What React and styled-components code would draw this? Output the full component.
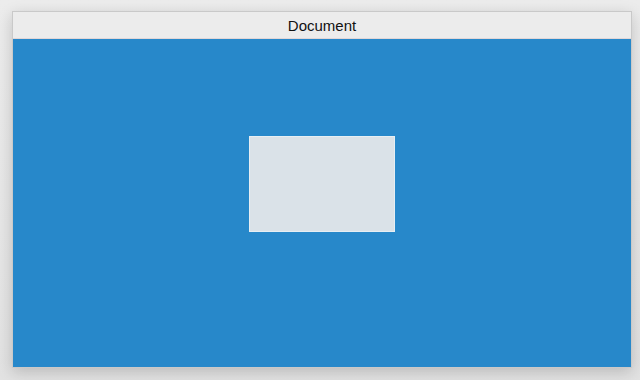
import React from 'react'
import styled, { createGlobalStyle } from 'styled-components'

const GlobalStyle = createGlobalStyle`
  html, body {
    margin: 0;
    padding: 0;
    background: #e6e6e6;
    font-family: "Helvetica Neue", "Liberation Sans", Arial, sans-serif;
  }
`

const Desktop = styled.div`
  width: 640px;
  height: 380px;
  padding: 11px 0 0 12px;
  box-sizing: border-box;
  background: linear-gradient(#ececec, #e2e2e2);
`

const Window = styled.div`
  width: 620px;
  height: 357px;
  border: 1px solid #c9c9c9;
  box-sizing: border-box;
  display: flex;
  flex-direction: column;
  box-shadow: 0 4px 14px rgba(0, 0, 0, 0.18);
`

const TitleBar = styled.div`
  height: 27px;
  background: #ececec;
  border-bottom: 1px solid #e0d6d8;
  display: flex;
  align-items: center;
  justify-content: center;
  font-size: 15px;
  color: #111;
  box-sizing: border-box;
  padding-top: 1px;
`

const Content = styled.div`
  flex: 1;
  background: #2788ca;
  display: flex;
  justify-content: center;
  align-items: flex-start;
  padding-top: 97px;
`

const Panel = styled.div`
  width: 146px;
  height: 96px;
  box-sizing: border-box;
  background: #dae2e8;
  border: 1px solid #e6eef3;
`

const App = () => {
  return (
    <>
      <GlobalStyle />
      <Desktop>
        <Window>
          <TitleBar>Document</TitleBar>
          <Content>
            <Panel />
          </Content>
        </Window>
      </Desktop>
    </>
  )
}

export default App
